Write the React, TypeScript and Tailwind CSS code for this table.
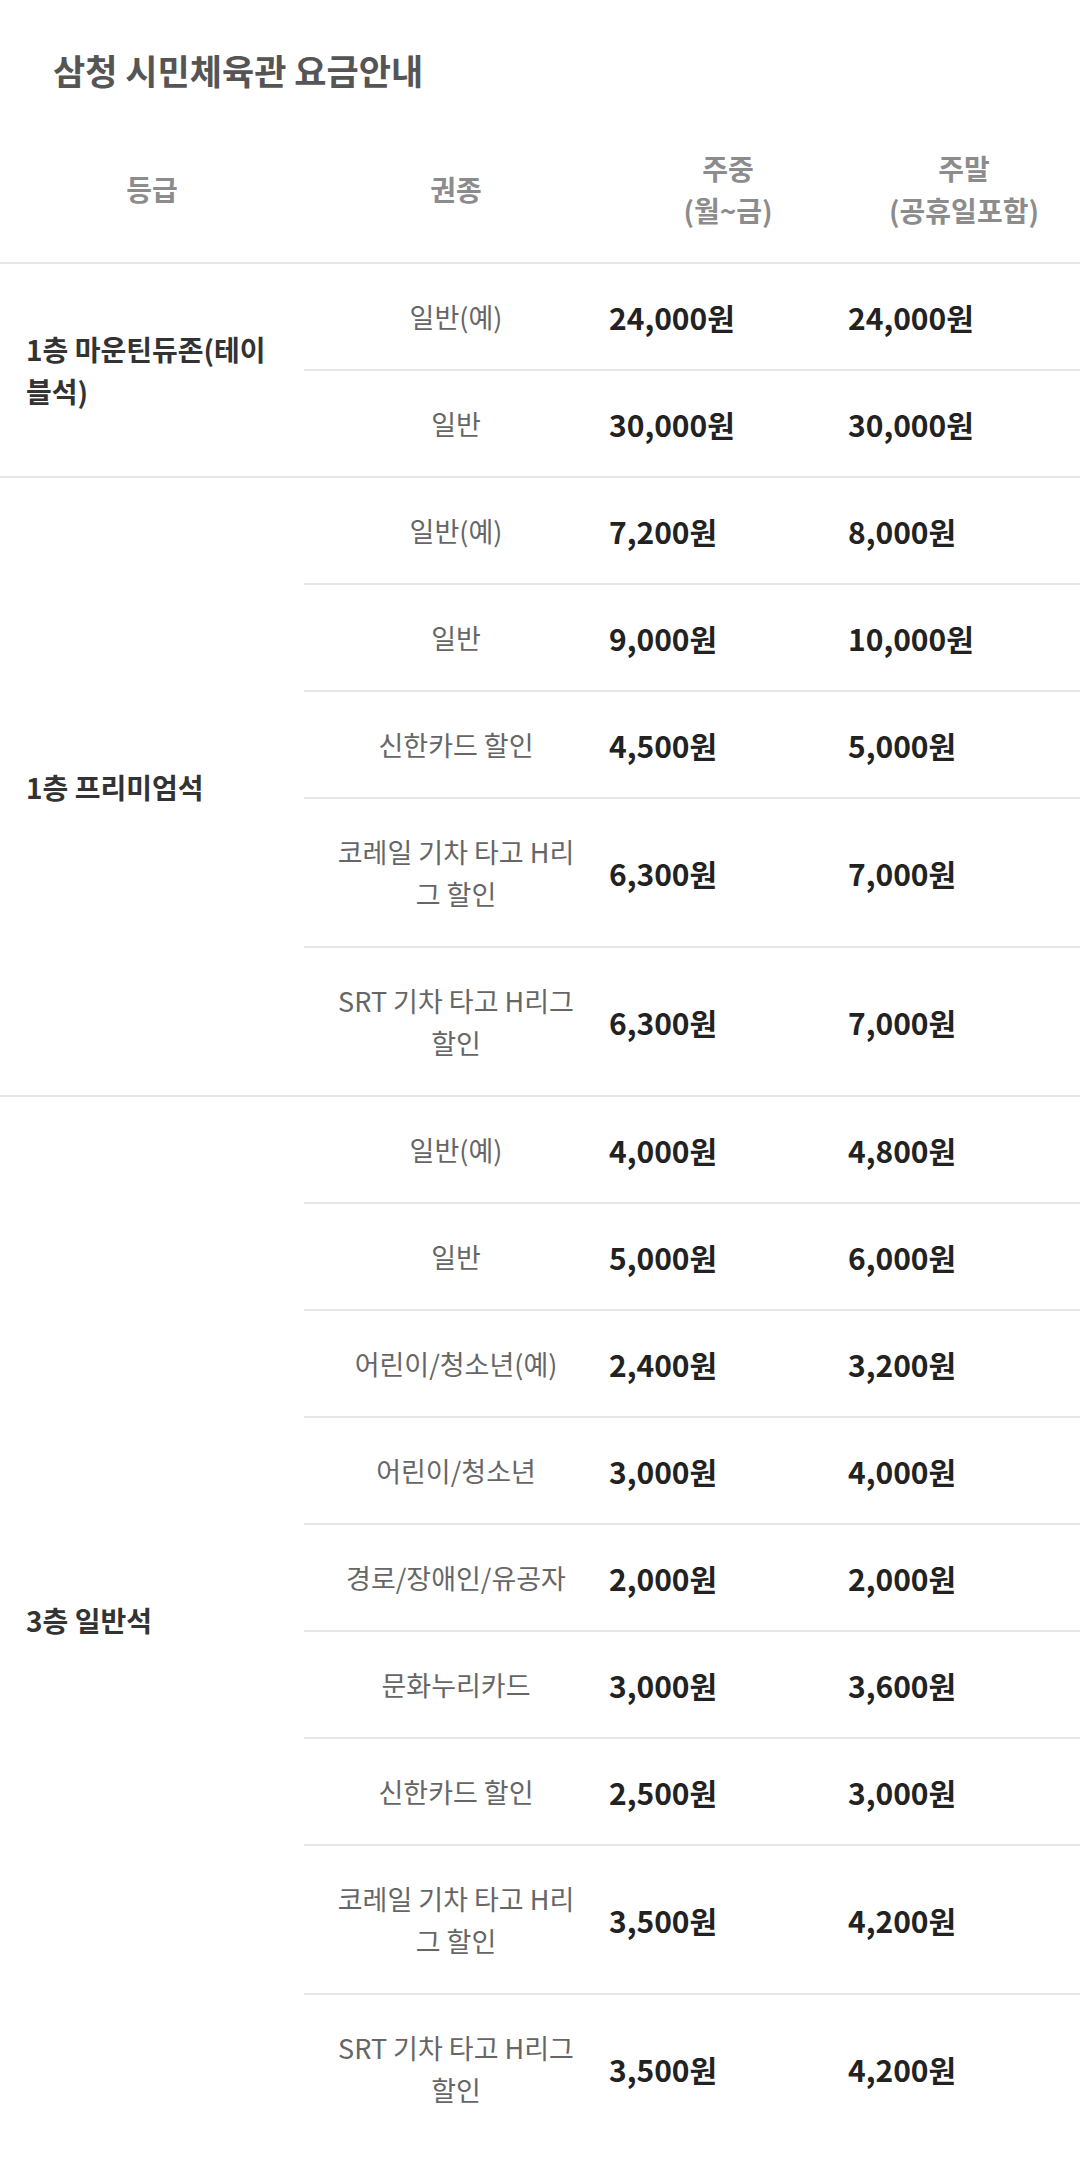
type Row = { ticket: string; weekday: string; weekend: string };
type Group = { grade: string; rows: Row[] };

const groups: Group[] = [
  {
    grade: "1층 마운틴듀존(테이블석)",
    rows: [
      { ticket: "일반(예)", weekday: "24,000원", weekend: "24,000원" },
      { ticket: "일반", weekday: "30,000원", weekend: "30,000원" },
    ],
  },
  {
    grade: "1층 프리미엄석",
    rows: [
      { ticket: "일반(예)", weekday: "7,200원", weekend: "8,000원" },
      { ticket: "일반", weekday: "9,000원", weekend: "10,000원" },
      { ticket: "신한카드 할인", weekday: "4,500원", weekend: "5,000원" },
      { ticket: "코레일 기차 타고 H리그 할인", weekday: "6,300원", weekend: "7,000원" },
      { ticket: "SRT 기차 타고 H리그 할인", weekday: "6,300원", weekend: "7,000원" },
    ],
  },
  {
    grade: "3층 일반석",
    rows: [
      { ticket: "일반(예)", weekday: "4,000원", weekend: "4,800원" },
      { ticket: "일반", weekday: "5,000원", weekend: "6,000원" },
      { ticket: "어린이/청소년(예)", weekday: "2,400원", weekend: "3,200원" },
      { ticket: "어린이/청소년", weekday: "3,000원", weekend: "4,000원" },
      { ticket: "경로/장애인/유공자", weekday: "2,000원", weekend: "2,000원" },
      { ticket: "문화누리카드", weekday: "3,000원", weekend: "3,600원" },
      { ticket: "신한카드 할인", weekday: "2,500원", weekend: "3,000원" },
      { ticket: "코레일 기차 타고 H리그 할인", weekday: "3,500원", weekend: "4,200원" },
      { ticket: "SRT 기차 타고 H리그 할인", weekday: "3,500원", weekend: "4,200원" },
    ],
  },
];

export default function App() {
  return (
    <div className="min-h-[2161px] w-[1080px] bg-white font-['Noto_Sans_CJK_KR','Noto_Sans',sans-serif]">
      <h1 className="pl-[53px] pt-[46px] text-[35px] font-bold leading-[48px] text-[#555555]">
        삼청 시민체육관 요금안내
      </h1>

      <table className="mt-[21px] w-full table-fixed border-collapse">
        <colgroup>
          <col className="w-[304px]" />
          <col className="w-[304px]" />
          <col className="w-[240px]" />
          <col className="w-[232px]" />
        </colgroup>
        <thead>
          <tr className="border-b-2 border-[#e6e6e6]">
            <HeadCell>등급</HeadCell>
            <HeadCell>권종</HeadCell>
            <HeadCell>
              주중
              <br />
              (월~금)
            </HeadCell>
            <HeadCell>
              주말
              <br />
              (공휴일포함)
            </HeadCell>
          </tr>
        </thead>
        <tbody>
          {groups.map((g, gi) => {
            const lastGroup = gi === groups.length - 1;
            return g.rows.map((r, ri) => {
              const lastRow = lastGroup && ri === g.rows.length - 1;
              return (
                <tr
                  key={`${gi}-${ri}`}
                  className={lastRow ? "" : "border-b-2 border-[#e6e6e6]"}
                >
                  {ri === 0 && (
                    <td
                      rowSpan={g.rows.length}
                      className={
                        "pl-[26px] pr-[29px] align-middle text-[28px] font-bold leading-[42px] text-[#333333] " +
                        (lastGroup ? "" : "border-b-2 border-[#e6e6e6]")
                      }
                    >
                      {g.grade}
                    </td>
                  )}
                  <td className="px-[28px] py-[31.5px] text-center align-middle text-[27px] leading-[42px] text-[#666666]">
                    {r.ticket}
                  </td>
                  <td className="py-[31.5px] pl-[1px] align-middle text-[30px] font-bold leading-[42px] text-[#222222]">
                    {r.weekday}
                  </td>
                  <td className="py-[31.5px] align-middle text-[30px] font-bold leading-[42px] text-[#222222]">
                    {r.weekend}
                  </td>
                </tr>
              );
            });
          })}
        </tbody>
      </table>
    </div>
  );
}

function HeadCell({ children }: { children: React.ReactNode }) {
  return (
    <th className="py-[31.5px] text-center align-middle text-[28px] font-semibold leading-[42px] text-[#8c8c8c]">
      {children}
    </th>
  );
}
